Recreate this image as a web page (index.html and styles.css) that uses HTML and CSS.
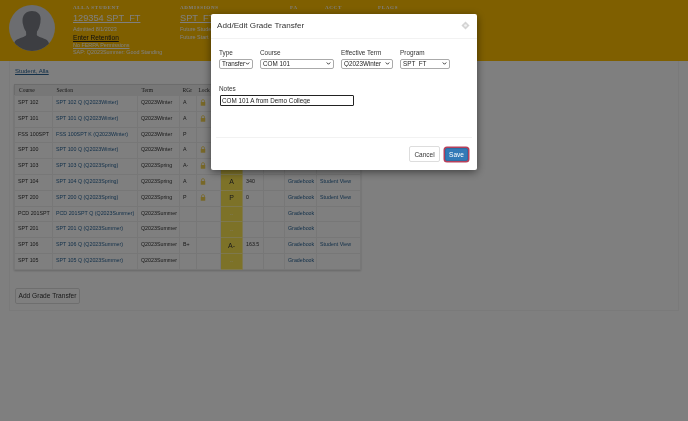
FILE: index.html
```html
<!DOCTYPE html>
<html lang="en">
<head>
    <meta charset="UTF-8">
    <meta name="viewport" content="width=device-width, initial-scale=1.0">
    <title>Add/Edit Grade Transfer</title>
    <link rel="stylesheet" href="styles.css">
</head>
<body>
    <div class="page">
        <div class="header">
            <svg class="avatar" viewBox="0 0 46 46">
                <circle cx="23" cy="23" r="23" fill="#d8dae0"/>
                <clipPath id="round"><circle cx="23" cy="23" r="23"/></clipPath>
                <g clip-path="url(#round)" fill="#7a7d84">
                    <path d="M23 6c-6 0-9.500 4-9.500 9.500 0 2 .3 3.500.8 5 .4 2 1.500 4.500 2.700 6l.2 3.500c-1 2-7 3-10 5-1.500 1-2.200 3-2.700 5.500v6h36v-6c-.5-2.500-1.200-4.500-2.700-5.500-3-2-9-3-10-5l.2-3.500c1.200-1.500 2.300-4 2.700-6 .5-1.500.8-3 .8-5C32.500 10 29 6 23 6z"/>
                </g>
            </svg>
            <div class="head-col student">
                <div class="head-title">ALLA STUDENT</div>
                <a class="head-big">129354 SPT_FT</a>
                <div class="head-line">Admitted 8/1/2023</div>
                <a class="head-retention">Enter Retention</a>
                <a class="head-line">No FERPA Permissions</a>
                <div class="head-line">SAP: Q2023Summer: Good Standing</div>
            </div>
            <div class="head-col admissions">
                <div class="head-title">ADMISSIONS</div>
                <a class="head-big">SPT_FT</a>
                <div class="head-line">Future Student</div>
                <div class="head-line">Future Start</div>
            </div>
            <div class="head-col fa"><div class="head-title">FA</div></div>
            <div class="head-col acct"><div class="head-title">ACCT</div></div>
            <div class="head-col flags"><div class="head-title">FLAGS</div></div>
        </div>

        <div class="panel">
            <a class="crumb">Student, Alla</a>
            <table class="grades">
                <thead>
                    <tr>
                        <th class="c-course">Course</th>
                        <th class="c-section">Section</th>
                        <th class="c-term">Term</th>
                        <th class="c-rgr">RGr</th>
                        <th class="c-lock">Lock</th>
                        <th class="c-grade"></th>
                        <th class="c-num"></th>
                        <th class="c-blank"></th>
                        <th class="c-book"></th>
                        <th class="c-view"></th>
                    </tr>
                </thead>
                <tbody id="rows"></tbody>
            </table>
            <button class="add-btn">Add Grade Transfer</button>
        </div>
    </div>

    <div class="backdrop">
        <div class="modal">
            <div class="modal-head">
                <h1>Add/Edit Grade Transfer</h1>
                <svg class="help" viewBox="0 0 10 10">
                    <path d="M5 .5 9.500 5 5 9.500 .5 5z" fill="#d4d4d4"/>
                    <circle cx="5" cy="5" r="1.500" fill="#f2f2f2"/>
                </svg>
            </div>
            <div class="modal-body">
                <div class="field-row">
                    <label class="field">Type
                        <select class="f-type"><option>Transfer</option></select>
                    </label>
                    <label class="field">Course
                        <select class="f-course"><option>COM 101</option></select>
                    </label>
                    <label class="field">Effective Term
                        <select class="f-term"><option>Q2023Winter</option></select>
                    </label>
                    <label class="field">Program
                        <select class="f-program"><option>SPT_FT</option></select>
                    </label>
                </div>
                <label class="field notes">Notes
                    <input class="f-notes" type="text" value="COM 101 A from Demo College">
                </label>
            </div>
            <div class="modal-foot">
                <button class="btn-cancel">Cancel</button>
                <button class="btn-save">Save</button>
            </div>
        </div>
    </div>

    <script>
        const rows = [
            ['SPT 102', 'SPT 102 Q (Q2023Winter)', 'Q2023Winter', 'A', true, 'A', '', true],
            ['SPT 101', 'SPT 101 Q (Q2023Winter)', 'Q2023Winter', 'A', true, 'A', '', true],
            ['FSS 100SPT', 'FSS 100SPT K (Q2023Winter)', 'Q2023Winter', 'P', false, 'P', '', true],
            ['SPT 100', 'SPT 100 Q (Q2023Winter)', 'Q2023Winter', 'A', true, 'A', '', true],
            ['SPT 103', 'SPT 103 Q (Q2023Spring)', 'Q2023Spring', 'A-', true, 'A-', '', true],
            ['SPT 104', 'SPT 104 Q (Q2023Spring)', 'Q2023Spring', 'A', true, 'A', '340', true],
            ['SPT 200', 'SPT 200 Q (Q2023Spring)', 'Q2023Spring', 'P', true, 'P', '0', true],
            ['PCD 201SPT', 'PCD 201SPT Q (Q2023Summer)', 'Q2023Summer', '', false, '--', '', false],
            ['SPT 201', 'SPT 201 Q (Q2023Summer)', 'Q2023Summer', '', false, '--', '', false],
            ['SPT 106', 'SPT 106 Q (Q2023Summer)', 'Q2023Summer', 'B+', false, 'A-', '163.5', true],
            ['SPT 105', 'SPT 105 Q (Q2023Summer)', 'Q2023Summer', '', false, '--', '', false]
        ];
        const lock = '<svg class="lock" viewBox="0 0 8 9"><path d="M2 4V2.600a2 2 0 0 1 4 0V4" fill="none" stroke="#f0d050" stroke-width="1"/><rect x="1" y="3.800" width="6" height="5" fill="#f0d050"/></svg>';

        document.getElementById('rows').innerHTML = rows.map(r => `
            <tr>
                <td>${r[0]}</td>
                <td><a>${r[1]}</a></td>
                <td>${r[2]}</td>
                <td>${r[3]}</td>
                <td class="c-lock">${r[4] ? lock : ''}</td>
                <td class="c-grade ${r[5] === '--' ? 'empty' : ''}">${r[5]}</td>
                <td>${r[6]}</td>
                <td></td>
                <td><a>Gradebook</a></td>
                <td>${r[7] ? '<a>Student View</a>' : ''}</td>
            </tr>
        `).join('');
    </script>
</body>
</html>
```

FILE: styles.css
```css
html, body {
    margin: 0;
    height: 100%;
    overflow: hidden;
}
body {
    font-family: "Liberation Sans", Arial, sans-serif;
    background: #fff;
    color: #333;
}
a {
    color: #2a6496;
}
.page {
    height: 421px;
    overflow: hidden;
    filter: blur(0.35px);
}
.header {
    height: 61px;
    background: #ffbf00;
    color: #fff;
    display: flex;
}
.avatar {
    width: 46px;
    height: 46px;
    margin: 5px 18px 0 9px;
    flex: none;
}
.head-col {
    padding-top: 4px;
    display: flex;
    flex-direction: column;
    align-items: flex-start;
}
.student { width: 107px; }
.admissions { width: 110px; }
.fa { width: 35px; }
.acct { width: 53px; }
.head-title {
    font-size: 5px;
    line-height: 7px;
    letter-spacing: .7px;
    font-family: "Liberation Serif", serif;
    font-weight: bold;
}
.head-big {
    color: #fff;
    font-size: 9.200px;
    line-height: 13px;
    margin-top: 1px;
    text-decoration: underline;
}
.head-line {
    color: #fff;
    font-size: 5.400px;
    line-height: 7.500px;
}
a.head-line {
    text-decoration: underline;
}
.head-big + .head-line {
    margin-top: 1px;
}
.head-retention {
    color: #222;
    font-size: 6.600px;
    line-height: 8px;
    text-decoration: underline;
}

.panel {
    box-sizing: border-box;
    margin: 0 9px;
    height: 250px;
    padding-top: 6px;
    border: 1px solid #f4f4f4;
    border-top: none;
}
.crumb {
    display: block;
    margin-left: 5px;
    font-size: 6px;
    line-height: 9px;
    text-decoration: underline;
}
.grades {
    margin: 8px 0 0 4px;
    width: 346px;
    border-collapse: collapse;
    table-layout: fixed;
    border: 1px solid #d8d8d8;
    box-shadow: 0 1px 2px rgba(0,0,0,0.2);
    font-size: 5.300px;
}
.grades th {
    box-sizing: border-box;
    height: 11px;
    padding: 0 0 0 4px;
    font-weight: normal;
    text-align: left;
    background: #eee;
    font-family: "Liberation Serif", serif;
    font-size: 5.500px;
    overflow: hidden;
    white-space: nowrap;
}
.grades td {
    box-sizing: border-box;
    height: 15.800px;
    padding: 3px 0 0 3px;
    border: 1px solid #eee;
    line-height: 6px;
    vertical-align: top;
    overflow: hidden;
    white-space: nowrap;
}
.c-course { width: 38px; }
.c-section { width: 85px; }
.c-term { width: 42px; }
.c-rgr { width: 17px; }
.c-lock { width: 24px; }
.c-grade { width: 22px; }
.c-num { width: 21px; }
.c-blank { width: 21px; }
.c-book { width: 32px; }
.c-view { width: 44px; }
.grades th.c-rgr {
    padding-left: 3px;
}
.grades th.c-lock {
    padding-left: 2px;
}
.grades td.c-lock {
    padding: 3px 0 0 3px;
}
.grades td.c-grade {
    background: #fbe451;
    padding: 0;
    text-align: center;
    vertical-align: middle;
    font-size: 7px;
    border-color: #fdf09a;
}
.grades td.c-grade.empty {
    color: #fff6b8;
    font-size: 5px;
}
.lock {
    width: 6px;
    height: 7px;
    display: block;
}
.add-btn {
    display: block;
    margin: 18px 0 0 5px;
    width: 65px;
    height: 16px;
    padding: 0;
    background: #fff;
    border: 1px solid #ddd;
    border-radius: 2px;
    font-family: inherit;
    font-size: 6.600px;
    color: #333;
}

.backdrop {
    position: fixed;
    inset: 0;
    background: rgba(0,0,0,0.5);
    padding-top: 14px;
}
.modal {
    width: 266px;
    height: 156px;
    margin-left: 211px;
    background: #fff;
    border-radius: 2px;
    box-shadow: 0 2px 8px rgba(0,0,0,0.5);
    display: flex;
    flex-direction: column;
    filter: blur(0.25px);
}
.modal-head {
    box-sizing: border-box;
    height: 25px;
    padding: 0 7px 1px 6px;
    border-bottom: 1px solid #f2f2f2;
    display: flex;
    align-items: center;
    justify-content: space-between;
}
.modal-head h1 {
    margin: 0;
    font-size: 8.100px;
    font-weight: normal;
    color: #333;
}
.help {
    width: 9px;
    height: 9px;
}
.modal-body {
    flex: 1;
    padding: 9px 8px 0;
}
.field-row {
    display: flex;
    gap: 7px;
}
.field {
    display: flex;
    flex-direction: column;
    align-items: flex-start;
    font-size: 6.400px;
    line-height: 9px;
    gap: 2px;
    color: #333;
}
.field select {
    appearance: none;
    height: 9.500px;
    box-sizing: border-box;
    padding: 0 0 0 2px;
    font-family: inherit;
    font-size: 6.300px;
    color: #222;
    background: #fff url("data:image/svg+xml,%3Csvg xmlns='http://www.w3.org/2000/svg' viewBox='0 0 6 4'%3E%3Cpath d='M.7.7 3 3l2.300-2.300' fill='none' stroke='%23222' stroke-width='1.200'/%3E%3C/svg%3E") no-repeat right 2px center / 5px 3px;
    border: 1px solid #aaa;
    border-radius: 2px;
}
.f-type { width: 34px; }
.f-course { width: 74px; }
.f-term { width: 52px; }
.f-program { width: 50px; }
.notes {
    margin-top: 15px;
}
.f-notes {
    width: 134px;
    height: 11px;
    margin-left: 1px;
    box-sizing: border-box;
    padding: 0 1px;
    font-family: inherit;
    font-size: 6.300px;
    color: #222;
    border: 1px solid #222;
    border-radius: 1px;
    outline: none;
}
.modal-foot {
    height: 32px;
    margin: 0 5px;
    padding-right: 4px;
    border-top: 1px solid #f2f2f2;
    display: flex;
    justify-content: flex-end;
    align-items: center;
    gap: 5px;
}
.modal-foot button {
    padding: 0;
    font-family: inherit;
    font-size: 6.500px;
    border-radius: 2px;
}
.btn-cancel {
    width: 31px;
    height: 16px;
    background: #fff;
    border: 1px solid #ddd;
    color: #333;
}
.btn-save {
    width: 23px;
    height: 13px;
    background: #337ab7;
    border: 1px solid #2e6da4;
    color: #fff;
    box-shadow: 0 0 0 1.500px #b5405c;
}
```
